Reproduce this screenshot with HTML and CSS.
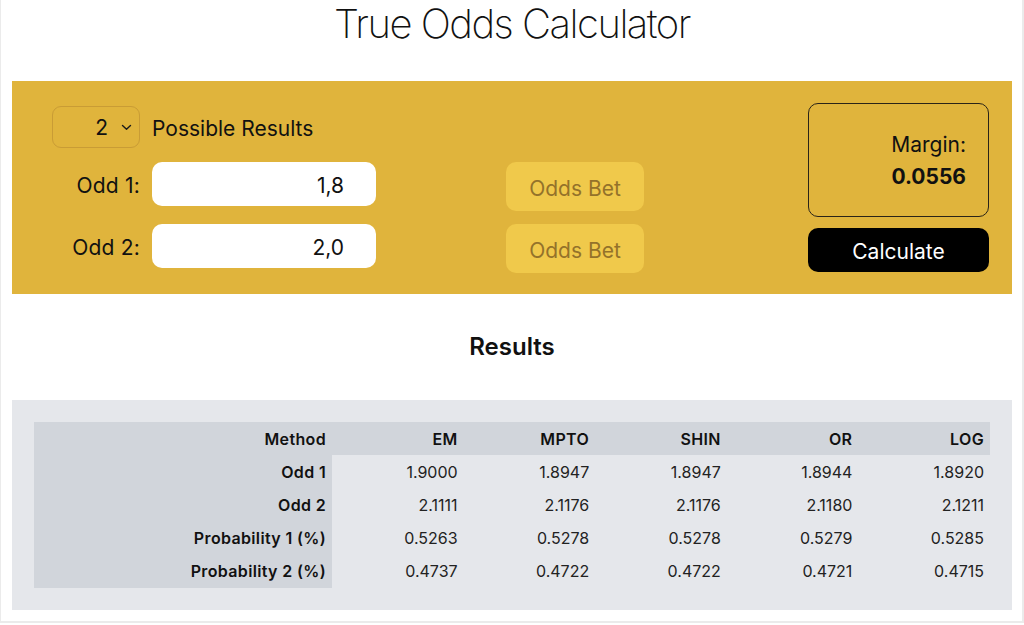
FILE: index.html
```html
<!DOCTYPE html>
<html lang="en">
<head>
<meta charset="utf-8">
<title>True Odds Calculator</title>
<link rel="stylesheet" href="styles.css">
</head>
<body>
<div class="page">
  <h1 class="title">True Odds Calculator</h1>

  <section class="calc">
    <div class="inputs">
      <div class="select">
        <span class="select-value">2</span>
        <svg class="chevron" width="11" height="7" viewBox="0 0 11 7"><path d="M1.5 1.5 L5.5 5.2 L9.5 1.5" fill="none" stroke="#1a1a1a" stroke-width="1.4" stroke-linecap="round" stroke-linejoin="round"/></svg>
      </div>
      <div class="possible">Possible Results</div>

      <label class="odd-label">Odd 1:</label>
      <div class="odd-input">1,8</div>
      <button class="odds-bet">Odds Bet</button>

      <label class="odd-label">Odd 2:</label>
      <div class="odd-input">2,0</div>
      <button class="odds-bet">Odds Bet</button>
    </div>

    <div class="side">
      <div class="margin-box">
        <div class="margin-label">Margin:</div>
        <div class="margin-value">0.0556</div>
      </div>
      <button class="calculate">Calculate</button>
    </div>
  </section>

  <h2 class="results-title">Results</h2>

  <section class="results">
    <table class="table">
      <thead>
        <tr><th class="rowhead">Method</th><th>EM</th><th>MPTO</th><th>SHIN</th><th>OR</th><th>LOG</th></tr>
      </thead>
      <tbody>
        <tr><th class="rowhead">Odd 1</th><td>1.9000</td><td>1.8947</td><td>1.8947</td><td>1.8944</td><td>1.8920</td></tr>
        <tr><th class="rowhead">Odd 2</th><td>2.1111</td><td>2.1176</td><td>2.1176</td><td>2.1180</td><td>2.1211</td></tr>
        <tr><th class="rowhead">Probability 1 (%)</th><td>0.5263</td><td>0.5278</td><td>0.5278</td><td>0.5279</td><td>0.5285</td></tr>
        <tr><th class="rowhead">Probability 2 (%)</th><td>0.4737</td><td>0.4722</td><td>0.4722</td><td>0.4721</td><td>0.4715</td></tr>
      </tbody>
    </table>
  </section>
</div>
</body>
</html>
```

FILE: styles.css
```css
* { box-sizing: border-box; }

html, body {
  margin: 0;
  padding: 0;
  background: #ffffff;
}

body {
  font-family: Inter, "Liberation Sans", sans-serif;
  color: #111111;
}

.page {
  width: 1024px;
  border-left: 1px solid #ebebeb;
  border-right: 2px solid #ebebeb;
  border-bottom: 2px solid #ebebeb;
  padding: 0 0 11px 11px;
}

.title {
  margin: 0;
  width: 1000px;
  height: 81px;
  font-family: Inter, Roboto, sans-serif;
  font-weight: 150;
  font-size: 40px;
  line-height: 48px;
  text-align: center;
  color: #111;
  letter-spacing: -1.5px;
}

.calc {
  width: 1000px;
  height: 213px;
  background: #e0b43c;
  display: flex;
  justify-content: space-between;
  padding: 22px 23px 0 40px;
}

.inputs {
  margin-top: 3px;
  display: grid;
  grid-template-columns: 88px 224px 256px;
  grid-template-rows: 44px 50px 50px;
  column-gap: 12px;
  row-gap: 12px;
  align-items: start;
}

.select {
  height: 42px;
  border: 1px solid #c99c35;
  border-radius: 9px;
  display: flex;
  align-items: center;
  justify-content: flex-end;
  padding-right: 7px;
  gap: 13px;
  font-size: 21px;
}

.chevron { margin-top: 1px; }

.possible {
  height: 44px;
  display: flex;
  align-items: center;
  font-size: 21px;
  grid-column: 2 / span 2;
}

.odd-label {
  height: 46px;
  display: flex;
  align-items: center;
  justify-content: flex-end;
  font-size: 21px;
  letter-spacing: 0.2px;
}

.odd-input {
  height: 44px;
  background: #ffffff;
  border-radius: 10px;
  display: flex;
  align-items: center;
  justify-content: flex-end;
  padding: 3px 32px 0 0;
  font-size: 21px;
}

.odds-bet {
  justify-self: end;
  width: 138px;
  height: 49px;
  border: none;
  border-radius: 10px;
  background: #f0c94b;
  color: #94722a;
  font-family: Inter, "Liberation Sans", sans-serif;
  font-size: 21px;
  padding: 3px 0 0 0;
}

.side {
  width: 181px;
  display: flex;
  flex-direction: column;
  gap: 11px;
}

.margin-box {
  height: 114px;
  border: 1.5px solid #2a2418;
  border-radius: 10px;
  display: flex;
  flex-direction: column;
  justify-content: center;
  align-items: flex-end;
  padding: 2px 22px 0 0;
  gap: 2px;
}

.margin-label {
  font-size: 21px;
  line-height: 30px;
}

.margin-value {
  font-size: 21px;
  line-height: 30px;
  font-weight: 700;
}

.calculate {
  height: 44px;
  border: none;
  border-radius: 10px;
  background: #000000;
  color: #ffffff;
  font-family: Inter, "Liberation Sans", sans-serif;
  font-size: 21px;
  padding: 2px 0 0 0;
}

.results-title {
  margin: 38px 0 38px 0;
  width: 1000px;
  font-size: 24px;
  line-height: 30px;
  font-weight: 600;
  text-align: center;
}

.results {
  width: 1000px;
  background: #e5e7eb;
  padding: 22px;
}

.table {
  width: 956px;
  border-collapse: collapse;
  table-layout: fixed;
  font-size: 16px;
}

.table th,
.table td {
  text-align: right;
  padding: 0 6px 0 0;
  height: 33px;
  white-space: nowrap;
}

.table tbody td,
.table tbody th { height: 33.25px; }

.table th { font-weight: 600; color: #111; letter-spacing: 0.35px; }
.table td { font-weight: 400; color: #222; }

.table thead tr { background: #d1d5db; }
.table .rowhead { width: 298px; background: #d1d5db; }
```
